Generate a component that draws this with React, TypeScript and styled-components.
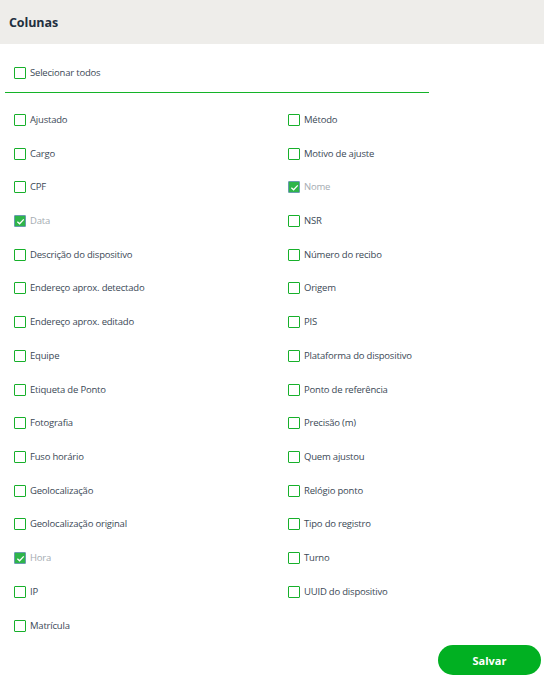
import React, { useState } from "react";
import styled, { createGlobalStyle } from "styled-components";

const Global = createGlobalStyle`
  html, body { margin: 0; padding: 0; background: #ffffff; }
  body { font-family: "Open Sans", "Noto Sans", sans-serif; }
`;

const Page = styled.div`
  width: 544px;
  height: 682px;
  display: flex;
  flex-direction: column;
`;

const Header = styled.div`
  height: 44px;
  background: #eeedea;
  display: flex;
  align-items: center;
  padding-left: 9px;
  box-sizing: border-box;
`;

const Title = styled.h1`
  margin: 0;
  font-size: 12.5px;
  font-weight: 700;
  color: #1f3040;
  letter-spacing: -0.1px;
`;

const SelectAllRow = styled.div`
  height: 48px;
  display: flex;
  align-items: center;
  padding-left: 14px;
  padding-top: 10px;
  box-sizing: border-box;
`;

const Divider = styled.div`
  margin-left: 5px;
  width: 424px;
  height: 1px;
  background: #14b328;
`;

const Grid = styled.div`
  display: grid;
  grid-template-columns: 274px 256px;
  grid-auto-flow: column;
  grid-template-rows: repeat(16, 33.73px);
  padding-left: 14px;
  padding-top: 10px;
`;

const Item = styled.label`
  display: flex;
  align-items: center;
  gap: 4px;
  cursor: pointer;
`;

const Box = styled.span<{ $checked: boolean }>`
  width: 12px;
  height: 12px;
  box-sizing: border-box;
  border: 1.5px solid ${(p) => (p.$checked ? "#6a9bb0" : "#17b02b")};
  background: ${(p) => (p.$checked ? "#2eb54a" : "#ffffff")};
  border-radius: 1px;
  display: flex;
  align-items: center;
  justify-content: center;
  flex: none;
`;

const Label = styled.span<{ $muted: boolean }>`
  font-size: 9.5px;
  letter-spacing: -0.2px;
  color: ${(p) => (p.$muted ? "#a4abb1" : "#3b4956")};
  line-height: 12px;
`;

const Footer = styled.div`
  flex: 1;
  display: flex;
  justify-content: flex-end;
  align-items: flex-end;
  padding: 0 3px 7px 0;
`;

const SaveButton = styled.button`
  width: 103px;
  height: 30px;
  border: none;
  border-radius: 15px;
  background: #01b022;
  color: #ffffff;
  font-family: "Open Sans", "Noto Sans", sans-serif;
  font-weight: 700;
  font-size: 11px;
  cursor: pointer;
`;

const Check = () => (
  <svg width="9" height="9" viewBox="0 0 10 10">
    <path d="M1.5 5.2 L4 7.5 L8.6 2.6" fill="none" stroke="#ffffff" strokeWidth="1.4" />
  </svg>
);

const left = [
  "Ajustado",
  "Cargo",
  "CPF",
  "Data",
  "Descrição do dispositivo",
  "Endereço aprox. detectado",
  "Endereço aprox. editado",
  "Equipe",
  "Etiqueta de Ponto",
  "Fotografia",
  "Fuso horário",
  "Geolocalização",
  "Geolocalização original",
  "Hora",
  "IP",
  "Matrícula",
];
const right = [
  "Método",
  "Motivo de ajuste",
  "Nome",
  "NSR",
  "Número do recibo",
  "Origem",
  "PIS",
  "Plataforma do dispositivo",
  "Ponto de referência",
  "Precisão (m)",
  "Quem ajustou",
  "Relógio ponto",
  "Tipo do registro",
  "Turno",
  "UUID do dispositivo",
];
const fixed = new Set(["Data", "Nome", "Hora"]);

const Option = ({ label, checked }: { label: string; checked: boolean }) => (
  <Item>
    <Box $checked={checked}>{checked && <Check />}</Box>
    <Label $muted={checked}>{label}</Label>
  </Item>
);

export default function App() {
  const [all] = useState(false);
  return (
    <Page>
      <Global />
      <Header>
        <Title>Colunas</Title>
      </Header>
      <SelectAllRow>
        <Option label="Selecionar todos" checked={all} />
      </SelectAllRow>
      <Divider />
      <Grid>
        {left.map((l) => (
          <Option key={l} label={l} checked={fixed.has(l)} />
        ))}
        {right.map((l) => (
          <Option key={l} label={l} checked={fixed.has(l)} />
        ))}
      </Grid>
      <Footer>
        <SaveButton>Salvar</SaveButton>
      </Footer>
    </Page>
  );
}
